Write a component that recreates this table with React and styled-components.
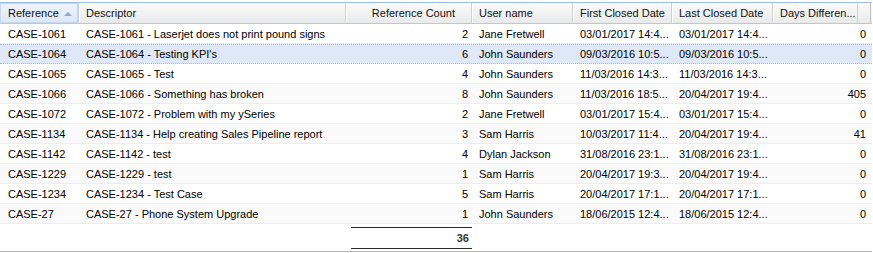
import React from "react";
import styled, { createGlobalStyle, css } from "styled-components";

const Global = createGlobalStyle`
  html, body { margin: 0; padding: 0; background: #fff; }
  body { width: 873px; height: 253px; overflow: hidden; font-family: "Liberation Sans", Arial, sans-serif; }
`;

const COLS = "79px 267px 126px 101px 99px 101px 1fr";

const Panel = styled.div`
  margin-top: 2px;
  width: 872px;
  border-top: 1px solid #99bce8;
  border-bottom: 1px solid #99bce8;
  font-size: 11px;
  color: #000;
`;

const Header = styled.div`
  display: grid;
  grid-template-columns: 79px 267px 126px 101px 99px 101px 85px 13px;
  height: 20px;
  border-bottom: 1px solid #c5c5c5;
  background: linear-gradient(#fafafa, #e9eaeb);
`;

const HeadCell = styled.div`
  display: flex;
  align-items: center;
  justify-content: ${(p) => (p.$right ? "flex-end" : "flex-start")};
  gap: 5px;
  padding: 0 ${(p) => (p.$right ? "16px" : "4px")} 0 ${(p) => (p.$first ? "8px" : "7px")};
  border-right: 1px solid #d0d0d0;
  box-shadow: inset 1px 0 0 #fff;
  color: #111;
  white-space: nowrap;
  overflow: hidden;
  ${(p) =>
    p.$sorted &&
    css`
      background: linear-gradient(#eef4fc, #dce7f6);
      box-shadow: inset 0 0 0 1px #c7d7ee;
      border-right-color: #c0d0e8;
    `}
`;

const SortArrow = styled.span`
  width: 0;
  height: 0;
  border-left: 4px solid transparent;
  border-right: 4px solid transparent;
  border-bottom: 4px solid #8ea8cc;
  margin-top: 1px;
`;

const Filler = styled.div`
  border-right: 1px solid #c5c5c5;
`;

const Row = styled.div`
  display: grid;
  grid-template-columns: ${COLS};
  height: 20px;
  box-sizing: border-box;
  border-top: 1px ${(p) => (p.$selected ? "dotted #a3bae9" : "solid #fff")};
  border-bottom: 1px ${(p) => (p.$selected ? "dotted #a3bae9" : "solid #ededed")};
  background: ${(p) => (p.$selected ? "#dfe8f6" : p.$alt ? "#fafafa" : "#fff")};
`;

const Cell = styled.div`
  display: flex;
  align-items: center;
  justify-content: ${(p) => (p.$right ? "flex-end" : "flex-start")};
  padding: 0 ${(p) => (p.$last ? "6px" : p.$right ? "4px" : "3px")} 0 ${(p) => (p.$first ? "8px" : "7px")};
  white-space: nowrap;
  overflow: hidden;
`;

const Summary = styled.div`
  display: grid;
  grid-template-columns: ${COLS};
  height: 22px;
  margin-top: 3px;
  margin-bottom: 2px;
`;

const Total = styled.div`
  grid-column: 3;
  margin-left: 5px;
  box-sizing: border-box;
  border-top: 1px solid #2a2a2a;
  border-bottom: 1px solid #2a2a2a;
  display: flex;
  align-items: center;
  justify-content: flex-end;
  padding-right: 3px;
  font-weight: bold;
  color: #333;
`;

const rows = [
  ["CASE-1061", "CASE-1061 - Laserjet does not print pound signs", 2, "Jane Fretwell", "03/01/2017 14:4...", "03/01/2017 14:4...", 0],
  ["CASE-1064", "CASE-1064 - Testing KPI's", 6, "John Saunders", "09/03/2016 10:5...", "09/03/2016 10:5...", 0],
  ["CASE-1065", "CASE-1065 - Test", 4, "John Saunders", "11/03/2016 14:3...", "11/03/2016 14:3...", 0],
  ["CASE-1066", "CASE-1066 - Something has broken", 8, "John Saunders", "11/03/2016 18:5...", "20/04/2017 19:4...", 405],
  ["CASE-1072", "CASE-1072 - Problem with my ySeries", 2, "Jane Fretwell", "03/01/2017 15:4...", "03/01/2017 15:4...", 0],
  ["CASE-1134", "CASE-1134 - Help creating Sales Pipeline report", 3, "Sam Harris", "10/03/2017 11:4...", "20/04/2017 19:4...", 41],
  ["CASE-1142", "CASE-1142 - test", 4, "Dylan Jackson", "31/08/2016 23:1...", "31/08/2016 23:1...", 0],
  ["CASE-1229", "CASE-1229 - test", 1, "Sam Harris", "20/04/2017 19:3...", "20/04/2017 19:4...", 0],
  ["CASE-1234", "CASE-1234 - Test Case", 5, "Sam Harris", "20/04/2017 17:1...", "20/04/2017 17:1...", 0],
  ["CASE-27", "CASE-27 - Phone System Upgrade", 1, "John Saunders", "18/06/2015 12:4...", "18/06/2015 12:4...", 0],
];

export default function App() {
  return (
    <>
      <Global />
      <Panel>
        <Header>
          <HeadCell $first $sorted>
            Reference <SortArrow />
          </HeadCell>
          <HeadCell>Descriptor</HeadCell>
          <HeadCell $right>Reference Count</HeadCell>
          <HeadCell>User name</HeadCell>
          <HeadCell>First Closed Date</HeadCell>
          <HeadCell>Last Closed Date</HeadCell>
          <HeadCell>Days Differen...</HeadCell>
          <Filler />
        </Header>
        {rows.map((r, i) => (
          <Row key={r[0]} $selected={i === 1} $alt={i % 2 === 1}>
            <Cell $first>{r[0]}</Cell>
            <Cell>{r[1]}</Cell>
            <Cell $right>{r[2]}</Cell>
            <Cell>{r[3]}</Cell>
            <Cell>{r[4]}</Cell>
            <Cell>{r[5]}</Cell>
            <Cell $right $last>{r[6]}</Cell>
          </Row>
        ))}
        <Summary>
          <Total>36</Total>
        </Summary>
      </Panel>
    </>
  );
}
